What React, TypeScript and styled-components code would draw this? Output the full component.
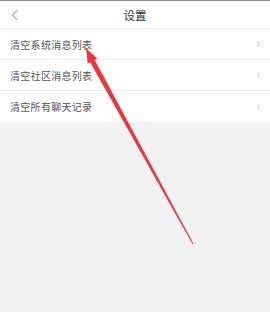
import React, { FC } from "react";
import styled, { createGlobalStyle } from "styled-components";

const GlobalStyle = createGlobalStyle`
  html, body {
    margin: 0;
    padding: 0;
    background: #f2f2f4;
    font-family: "Noto Sans CJK SC", "Noto Sans", sans-serif;
  }
`;

const Page = styled.div`
  position: relative;
  width: 270px;
  height: 312px;
  background: #f2f2f4;
  border-top: 1px solid #8c8c8c;
  box-sizing: border-box;
  overflow: hidden;
`;

const Header = styled.div`
  height: 27px;
  background: #ffffff;
  border-bottom: 1px solid #e6e6e6;
  display: flex;
  align-items: center;
  justify-content: center;
  position: relative;
`;

const Back = styled.svg`
  position: absolute;
  left: 11px;
  top: 8px;
`;

const Title = styled.span`
  font-size: 11.5px;
  color: #333333;
`;

const List = styled.div`
  background: #ffffff;
`;

const Row = styled.div`
  height: 30px;
  display: flex;
  align-items: center;
  justify-content: space-between;
  padding: 0 9px 0 10px;
  border-bottom: 1px solid #ececec;
  &:last-child {
    border-bottom: none;
    height: 31px;
  }
`;

const Label = styled.span`
  font-size: 10px;
  color: #555555;
  letter-spacing: 0.3px;
`;

const Overlay = styled.svg`
  position: absolute;
  left: 0;
  top: 0;
  pointer-events: none;
`;

const Chevron: FC = () => (
  <svg width="5" height="8" viewBox="0 0 5 8">
    <path d="M1 1 L4 4 L1 7" fill="none" stroke="#cfcfcf" strokeWidth="1" />
  </svg>
);

const items = ["清空系统消息列表", "清空社区消息列表", "清空所有聊天记录"];

const App: FC = () => (
  <>
    <GlobalStyle />
    <Page>
      <Header>
        <Back width="8" height="12" viewBox="0 0 8 12">
          <path d="M6.5 1 L1.5 6 L6.5 11" fill="none" stroke="#b0b0b0" strokeWidth="1.1" />
        </Back>
        <Title>设置</Title>
      </Header>
      <List>
        {items.map(item => (
          <Row key={item}>
            <Label>{item}</Label>
            <Chevron />
          </Row>
        ))}
      </List>
      <Overlay width="270" height="312" viewBox="0 0 270 312">
        <polygon points="86,47 87.6,62.6 97.2,57.4" fill="#e8383d" />
        <polygon points="90,61 94.5,58.5 193.5,242.8 192.5,243.2" fill="#e8383d" />
      </Overlay>
    </Page>
  </>
);

export default App;
